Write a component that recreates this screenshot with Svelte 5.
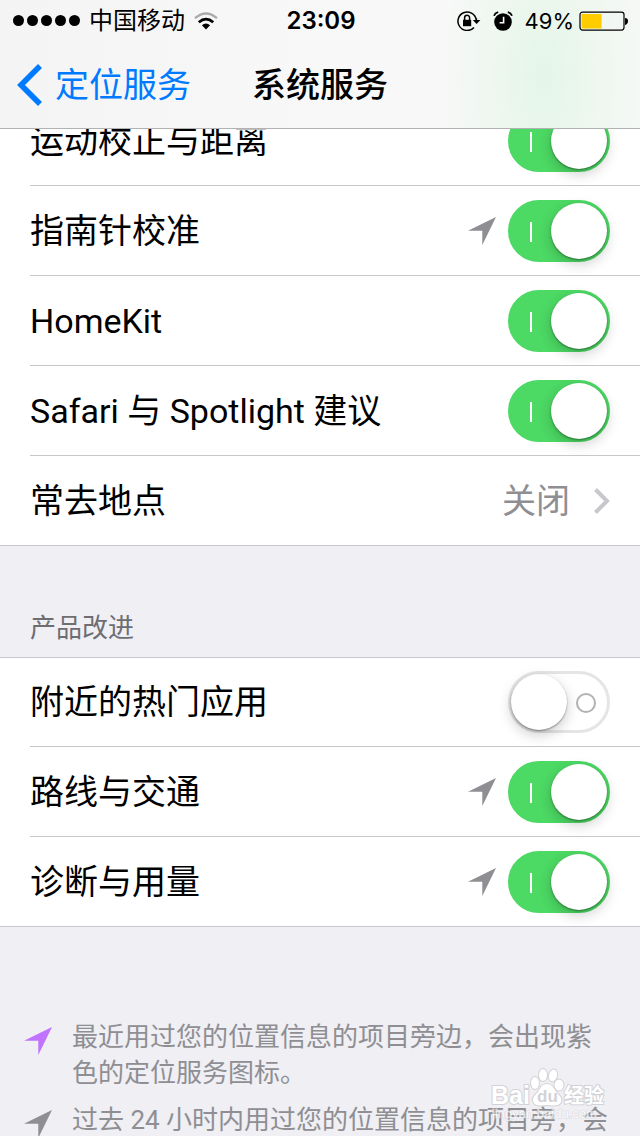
<script>
  const general = $state([
    { label: '运动校正与距离', on: true },
    { label: '指南针校准', on: true, arrow: true },
    { label: 'HomeKit', on: true },
    { label: 'Safari 与 Spotlight 建议', on: true },
    { label: '常去地点', value: '关闭' }
  ]);
  const product = $state([
    { label: '附近的热门应用', on: false },
    { label: '路线与交通', on: true, arrow: true },
    { label: '诊断与用量', on: true, arrow: true }
  ]);
  const notes = [
    { color: 'purple', text: '最近用过您的位置信息的项目旁边，会出现紫色的定位服务图标。' },
    { color: 'gray', text: '过去 24 小时内用过您的位置信息的项目旁，会' }
  ];
</script>

{#snippet arrowIcon(color)}
  <svg class="arrow {color}" viewBox="0 0 28 28" aria-hidden="true">
    <path d="M0 13.8 28 0 14.3 28V13.8Z" />
  </svg>
{/snippet}

{#snippet group(rows, id)}
  <ul class="group">
    {#each rows as row, i}
      <li class="row">
        {#if row.value}
          <a class="link" href="#places">
            <span class="label">{row.label}</span>
            <span class="value">{row.value}</span>
            <svg class="more" viewBox="0 0 16 26" aria-hidden="true"><path d="M1.5 1.5 13 13 1.5 24.5" /></svg>
          </a>
        {:else}
          <label class="label" for="{id}-{i}">{row.label}</label>
          {#if row.arrow}{@render arrowIcon('gray')}{/if}
          <input class="switch" type="checkbox" role="switch" id="{id}-{i}" bind:checked={row.on} />
        {/if}
      </li>
    {/each}
  </ul>
{/snippet}

<div class="screen">
  <header>
    <div class="status">
      <div class="carrier">
        <span class="dots"><i></i><i></i><i></i><i></i><i></i></span>
        <span>中国移动</span>
        <svg class="wifi" viewBox="0 0 24 18" aria-hidden="true">
          <path class="faint" d="M1 6.2Q12-3.4 23 6.2" />
          <path d="M4.8 10.2Q12 4 19.2 10.2" />
          <path class="solid" d="M7.9 13.2Q12 9.8 16.1 13.2L12 17.6Z" />
        </svg>
      </div>
      <time>23:09</time>
      <div class="indicators">
        <svg class="lock" viewBox="0 0 24 20" aria-hidden="true">
          <path class="line" d="M19.2 8.5A9.2 9.2 0 1 0 17 16.4" />
          <path class="line" d="M19.4 7.5V11" />
          <path d="M15.8 9H23.4L19.6 13Z" />
          <path d="M6 8.8H14.2V15.2H6Z" />
          <path class="line" d="M7.6 9.5V6.8A2.5 2.5 0 0 1 12.6 6.8V9.5" />
        </svg>
        <svg class="alarm" viewBox="0 0 20 20" aria-hidden="true">
          <circle cx="10" cy="11" r="8.8" />
          <path class="bell" d="M1 4.8Q2 2 5.2 1.2M19 4.8Q18 2 14.8 1.2" />
          <path class="hand" d="M10.6 5.8V11.8H6.6" />
        </svg>
        <span class="percent">49%</span>
        <svg class="battery" viewBox="0 0 50 20" aria-hidden="true">
          <rect class="case" x="1" y="1.1" width="44" height="18" rx="2.5" />
          <rect class="charge" x="2.6" y="3" width="20" height="14.5" />
          <path d="M46 7Q49 7 49 10T46 14Z" />
        </svg>
      </div>
    </div>
    <nav>
      <a class="back" href="#location">
        <svg viewBox="0 0 26 42" aria-hidden="true"><path d="M23 2 4 21 23 40" /></svg>
        <span>定位服务</span>
      </a>
      <h1>系统服务</h1>
    </nav>
  </header>

  <main>
    {@render group(general, 'general')}
    <h2>产品改进</h2>
    {@render group(product, 'product')}
    <div class="notes">
      {#each notes as note}
        <div class="note">
          {@render arrowIcon(note.color)}
          <p>{note.text}</p>
        </div>
      {/each}
    </div>
  </main>

  <svg class="watermark" viewBox="0 0 120 56" aria-hidden="true">
    <g class="paw">
      <ellipse cx="44" cy="17" rx="4" ry="6" />
      <ellipse cx="52" cy="9" rx="4" ry="6" />
      <ellipse cx="62" cy="9.5" rx="4" ry="6" transform="rotate(14 62 9.5)" />
      <ellipse cx="68" cy="19" rx="4.5" ry="5.5" />
      <path d="M56 18C50 18 49 24 45 28C39 33 42 40 50 39.5Q56 38.5 62 39.5C71 40 73 33 67 28C63 24 62 18 56 18Z" />
    </g>
    <text class="brand" x="0" y="38">Bai</text>
    <text class="du" x="46" y="36">du</text>
    <text class="brand cjk" x="73" y="37">经验</text>
    <text class="site" x="1" y="52">jingyan.baidu.com</text>
  </svg>
</div>

<style>
  :global(body) {
    margin: 0;
    background: #efeff4;
  }
  .screen {
    position: relative;
    height: 100vh;
    overflow: hidden;
    color: #000;
    background: #efeff4;
    font-family: Roboto, 'Noto Sans CJK SC', sans-serif;
    font-size: 34px;
    line-height: 48px;
  }
  a {
    color: inherit;
    text-decoration: none;
  }
  svg {
    display: block;
    flex: none;
  }
  header {
    position: relative;
    z-index: 1;
    border-bottom: 1px solid #b2b2b2;
    background:
      radial-gradient(ellipse 100px 200px at 85% 60%, #e4f6e8, #e4f6e800),
      linear-gradient(90deg, #f4f4f5, #f8f8f8 50%, #f6f8f6);
  }
  .status {
    display: grid;
    grid-template-columns: 1fr auto 1fr;
    align-items: center;
    height: 41px;
    padding: 0 11px 0 13px;
    font-family: Inter, 'Noto Sans CJK SC', sans-serif;
    font-size: 24px;
    line-height: 40px;
  }
  .carrier,
  .indicators {
    display: flex;
    align-items: center;
  }
  .indicators {
    justify-content: flex-end;
  }
  .dots {
    display: flex;
    gap: 3px;
    margin-right: 9px;
  }
  .dots i {
    width: 11px;
    height: 11px;
    border-radius: 50%;
    background: #000;
  }
  .wifi {
    width: 24px;
    height: 18px;
    margin-left: 9px;
  }
  .wifi path {
    fill: none;
    stroke: #000;
    stroke-width: 2.8;
  }
  .wifi .faint {
    stroke: #aaa;
    stroke-width: 2.4;
  }
  .wifi .solid {
    fill: #000;
    stroke: none;
  }
  time {
    font-weight: 600;
  }
  .lock {
    width: 24px;
    height: 20px;
    margin-right: 12px;
  }
  .lock .line {
    fill: none;
    stroke: #000;
    stroke-width: 1.5;
  }
  .alarm {
    width: 20px;
    height: 20px;
    margin-right: 12px;
  }
  .bell {
    fill: none;
    stroke: #000;
    stroke-width: 1.8;
  }
  .hand {
    fill: none;
    stroke: #fff;
    stroke-width: 1.6;
  }
  .percent {
    margin-right: 5px;
    font-size: 22px;
  }
  .battery {
    width: 50px;
    height: 20px;
  }
  .case {
    fill: none;
    stroke: #000;
    stroke-width: 1.2;
  }
  .charge {
    fill: #fc0;
  }
  nav {
    display: grid;
    grid-template-columns: 1fr auto 1fr;
    align-items: center;
    height: 87px;
    padding: 0 17px;
  }
  .back {
    display: flex;
    align-items: center;
    gap: 12px;
    color: #007aff;
  }
  .back svg {
    width: 26px;
    height: 42px;
  }
  .back path {
    fill: none;
    stroke: #007aff;
    stroke-width: 5.6;
  }
  h1 {
    margin: 0;
    font-size: 34px;
    font-weight: 500;
  }
  main {
    margin-top: -33px;
  }
  .group {
    margin: 0;
    padding: 0;
    list-style: none;
    background: #fff;
    box-shadow: inset 0 1px #c8c7cc;
  }
  .row {
    display: flex;
    align-items: center;
    box-sizing: border-box;
    height: 90px;
    margin-left: 30px;
    padding-right: 30px;
    border-bottom: 1px solid #c8c7cc;
  }
  .row:last-child {
    margin-left: 0;
    padding-left: 30px;
  }
  .link {
    display: flex;
    flex: 1;
    align-items: center;
  }
  .label {
    flex: 1;
  }
  .value {
    margin-right: 24px;
    color: #8e8e93;
  }
  .more {
    width: 16px;
    height: 26px;
  }
  .more path {
    fill: none;
    stroke: #c7c7cc;
    stroke-width: 4;
  }
  .arrow {
    width: 28px;
    height: 28px;
  }
  .row .arrow {
    margin-right: 12px;
  }
  .gray {
    fill: #8e8e93;
  }
  .purple {
    fill: #bf73ff;
  }
  .switch {
    position: relative;
    flex: none;
    box-sizing: border-box;
    width: 102px;
    height: 62px;
    margin: 0;
    border: 3px solid #e5e5e5;
    border-radius: 31px;
    background: #fff;
    appearance: none;
  }
  .switch::before {
    content: '';
    position: absolute;
    top: 19px;
    right: 11px;
    box-sizing: border-box;
    width: 20px;
    height: 20px;
    border: 2px solid #b2b2b2;
    border-radius: 50%;
  }
  .switch::after {
    content: '';
    position: absolute;
    top: 0;
    left: 0;
    width: 56px;
    height: 56px;
    border-radius: 50%;
    background: #fff;
    box-shadow:
      0 1px 2px #0006,
      0 5px 14px #0003;
  }
  .switch:checked {
    border-color: #4cd964;
    background: #4cd964;
  }
  .switch:checked::before {
    top: 19px;
    left: 19px;
    width: 2px;
    border: 0;
    border-radius: 0;
    background: #fff;
  }
  .switch:checked::after {
    left: 40px;
  }
  h2 {
    margin: 0;
    padding: 64px 30px 11px;
    color: #6d6d72;
    font-size: 26px;
    font-weight: 400;
    line-height: 36px;
  }
  .notes {
    display: grid;
    gap: 11px;
    padding: 92px 24px 0;
    color: #8e8e93;
    font-size: 26px;
    line-height: 36px;
  }
  .note {
    display: flex;
    gap: 20px;
  }
  .note .arrow {
    margin-top: 8px;
  }
  p {
    margin: 0;
  }
  .watermark {
    position: absolute;
    right: 29px;
    bottom: 14px;
    width: 120px;
    height: 56px;
    fill: #fff;
    stroke: #d2d2d6;
    stroke-width: 2;
    paint-order: stroke;
    font-family: 'Liberation Sans', 'Noto Sans CJK SC', sans-serif;
    font-weight: 700;
  }
  .brand {
    font-size: 25px;
  }
  .cjk {
    font-size: 20px;
  }
  .du {
    fill: #d2d2d6;
    stroke: none;
    font-size: 17px;
  }
  .site {
    font-size: 13px;
    font-weight: 400;
    stroke-width: 1;
    opacity: 0.7;
  }
</style>
